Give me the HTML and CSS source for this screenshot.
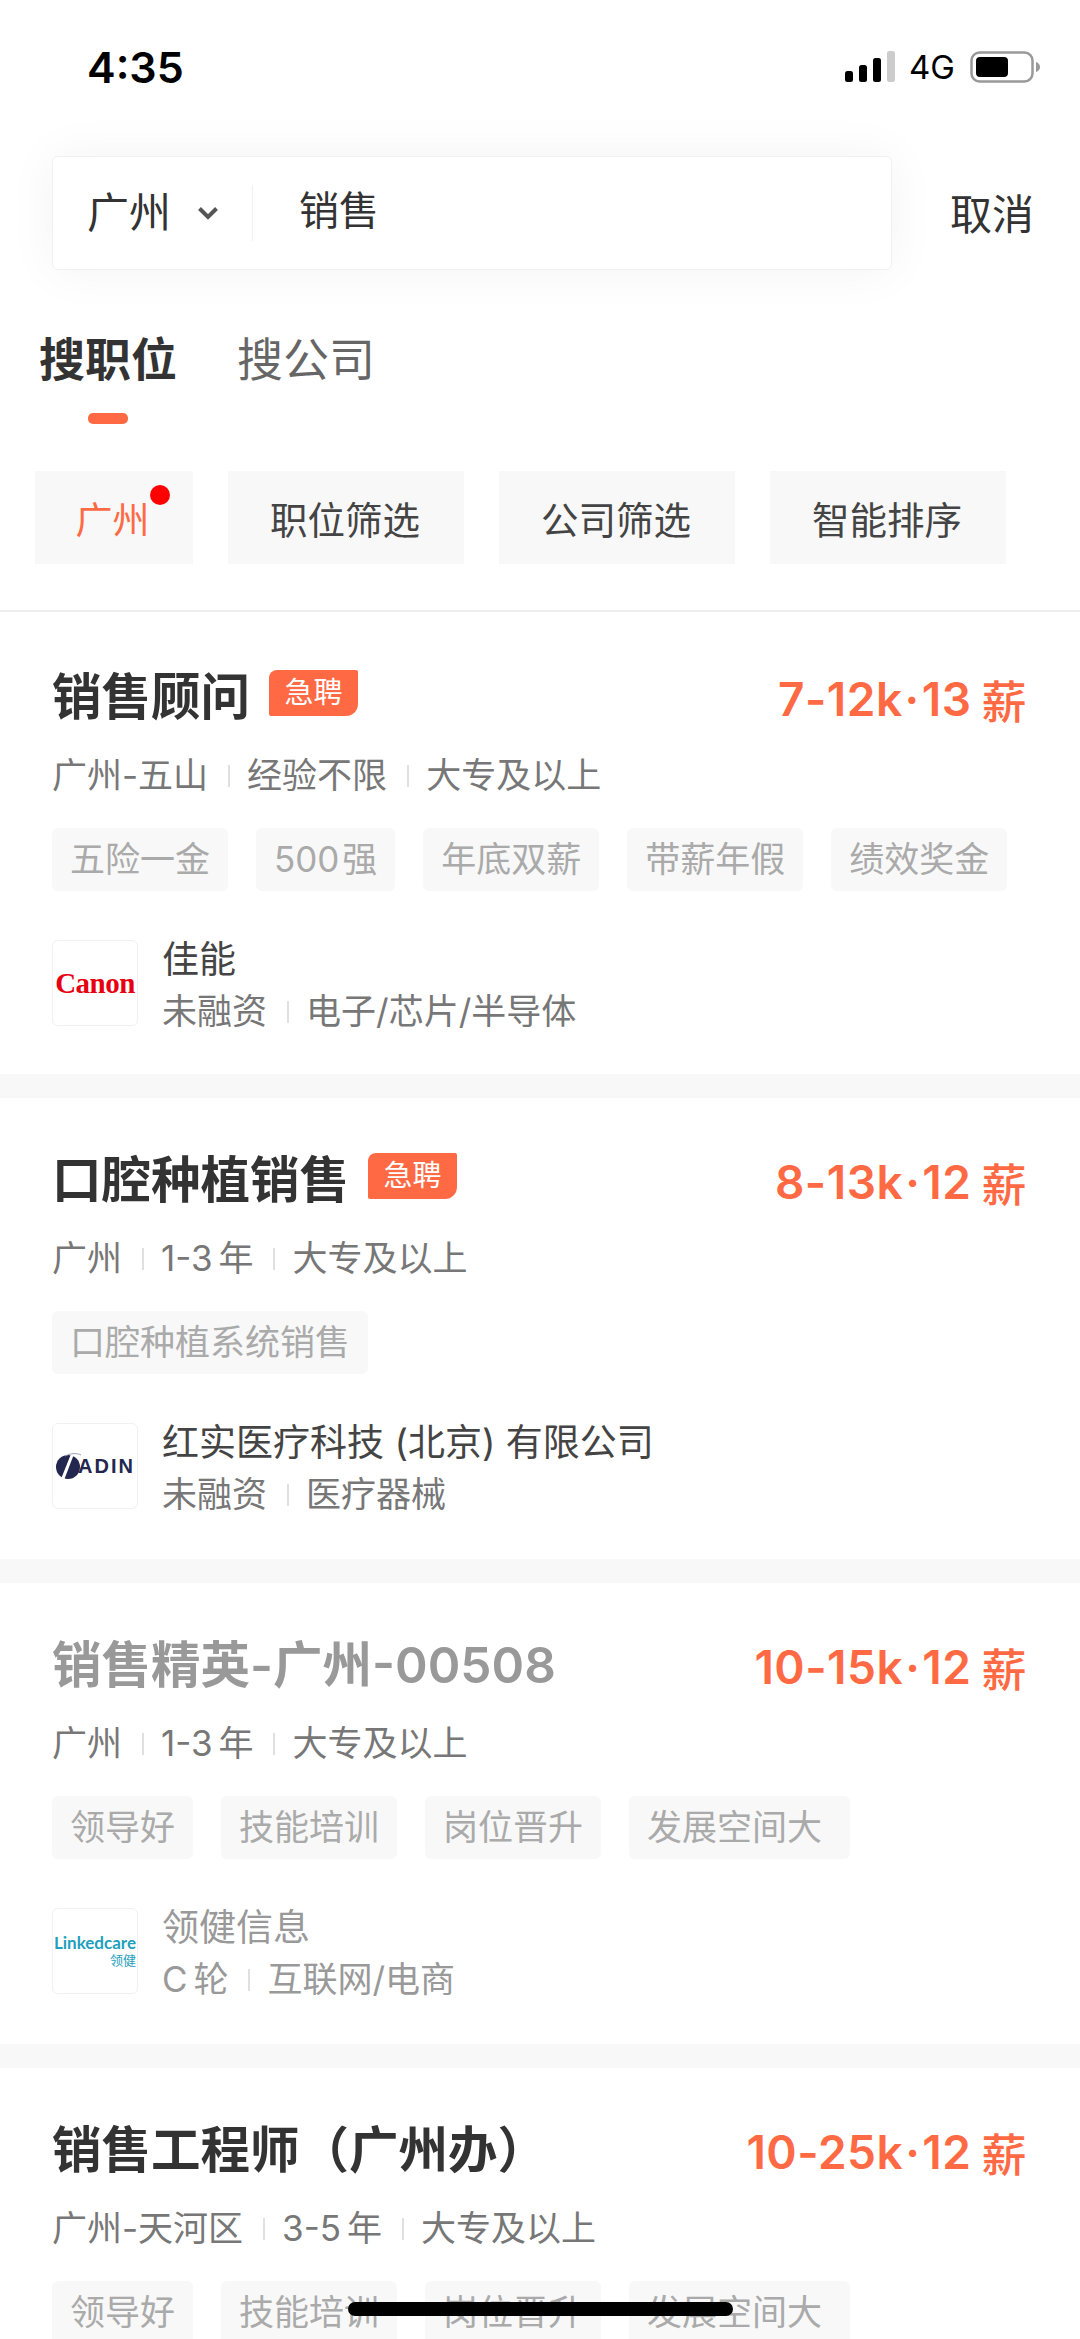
FILE: index.html
```html
<!DOCTYPE html>
<html lang="zh-CN">

<head>
    <meta charset="UTF-8">
    <meta name="viewport" content="width=device-width, initial-scale=1.0">
    <title>搜索职位</title>
    <link rel="stylesheet" href="styles.css">
</head>

<body>
    <div class="status-bar">
        <span class="status-time">4:35</span>
        <div class="status-right">
            <svg class="signal" width="50" height="32" viewBox="0 0 50 32">
                <rect x="0" y="20" width="8" height="11" rx="2.5" fill="#000"/>
                <rect x="14" y="14" width="8" height="17" rx="2.5" fill="#000"/>
                <rect x="28" y="7" width="8" height="24" rx="2.5" fill="#000"/>
                <rect x="42" y="0" width="8" height="31" rx="2.5" fill="#ccc"/>
            </svg>
            <span class="status-net">4G</span>
            <svg class="battery" width="70" height="32" viewBox="0 0 70 32">
                <rect x="1.5" y="1.5" width="61" height="29" rx="8" fill="none" stroke="#999" stroke-width="2.5"/>
                <rect x="6" y="6" width="32" height="20" rx="4" fill="#000"/>
                <path d="M66 11c2.500.8 4 2.700 4 5s-1.500 4.200-4 5z" fill="#999"/>
            </svg>
        </div>
    </div>

    <div class="search-row">
        <div class="search-box">
            <span class="search-city">广州</span>
            <svg class="chevron" width="22" height="14" viewBox="0 0 22 14">
                <path d="M2.500 2.500 11 11l8.500-8.500" fill="none" stroke="#555" stroke-width="4"/>
            </svg>
            <span class="search-sep"></span>
            <span class="search-text">销售</span>
        </div>
        <span class="search-cancel">取消</span>
    </div>

    <div class="tabs">
        <div class="tab tab-active">搜职位<span class="tab-bar"></span></div>
        <div class="tab">搜公司</div>
    </div>

    <div class="filters">
        <div class="filter filter-city">广州<span class="filter-dot"></span></div>
        <div class="filter filter-wide">职位筛选</div>
        <div class="filter filter-wide">公司筛选</div>
        <div class="filter filter-wide">智能排序</div>
    </div>

    <div class="card card-first">
        <div class="job-head">
            <div class="job-title">销售顾问<span class="urgent">急聘</span></div>
            <div class="salary">7-12k<span class="dot">·</span>13<span class="xin">薪</span></div>
        </div>
        <div class="meta"><span>广州-五山</span><span>经验不限</span><span>大专及以上</span></div>
        <div class="tags">
            <span class="tag">五险一金</span><span class="tag">500 强</span><span class="tag">年底双薪</span><span class="tag">带薪年假</span><span class="tag">绩效奖金</span>
        </div>
        <div class="company">
            <div class="logo"><span class="logo-canon">Canon</span></div>
            <div class="company-info">
                <div class="company-name">佳能</div>
                <div class="company-sub"><span>未融资</span><span>电子/芯片/半导体</span></div>
            </div>
        </div>
    </div>

    <div class="card">
        <div class="job-head">
            <div class="job-title">口腔种植销售<span class="urgent">急聘</span></div>
            <div class="salary">8-13k<span class="dot">·</span>12<span class="xin">薪</span></div>
        </div>
        <div class="meta"><span>广州</span><span>1-3 年</span><span>大专及以上</span></div>
        <div class="tags">
            <span class="tag">口腔种植系统销售</span>
        </div>
        <div class="company">
            <div class="logo">
                <svg class="logo-adin-mark" width="26" height="26" viewBox="0 0 26 26">
                    <circle cx="13" cy="14" r="12" fill="#23264f"/>
                    <path d="M16 1 6 26h3.500L19 1z" fill="#fff"/>
                    <path d="M10 3c6-3 12-3 16-1" fill="none" stroke="#9a9cb0" stroke-width="1"/>
                </svg>
                <span class="logo-adin">ADIN</span>
            </div>
            <div class="company-info">
                <div class="company-name">红实医疗科技 (北京) 有限公司</div>
                <div class="company-sub"><span>未融资</span><span>医疗器械</span></div>
            </div>
        </div>
    </div>

    <div class="card card-read">
        <div class="job-head">
            <div class="job-title">销售精英-广州-00508</div>
            <div class="salary">10-15k<span class="dot">·</span>12<span class="xin">薪</span></div>
        </div>
        <div class="meta"><span>广州</span><span>1-3 年</span><span>大专及以上</span></div>
        <div class="tags">
            <span class="tag">领导好</span><span class="tag">技能培训</span><span class="tag">岗位晋升</span><span class="tag tag-long">发展空间大</span>
        </div>
        <div class="company">
            <div class="logo logo-stack">
                <span class="logo-linked">Linkedcare</span>
                <span class="logo-linked-cn">领健</span>
            </div>
            <div class="company-info">
                <div class="company-name">领健信息</div>
                <div class="company-sub"><span>C 轮</span><span>互联网/电商</span></div>
            </div>
        </div>
    </div>

    <div class="card">
        <div class="job-head">
            <div class="job-title">销售工程师（广州办）</div>
            <div class="salary">10-25k<span class="dot">·</span>12<span class="xin">薪</span></div>
        </div>
        <div class="meta"><span>广州-天河区</span><span>3-5 年</span><span>大专及以上</span></div>
        <div class="tags">
            <span class="tag">领导好</span><span class="tag">技能培训</span><span class="tag">岗位晋升</span><span class="tag tag-long">发展空间大</span>
        </div>
    </div>

    <div class="home-bar"></div>
</body>

</html>
```

FILE: styles.css
```css
* {
    box-sizing: border-box;
}

html,
body {
    margin: 0;
    height: 2339px;
    overflow: hidden;
}

body {
    position: relative;
    background: #fff;
    color: #333;
    font-family: "Inter", "Noto Sans CJK SC", sans-serif;
}

/* status bar */
.status-bar {
    display: flex;
    justify-content: space-between;
    align-items: center;
    height: 66px;
    margin-top: 34px;
    padding: 0 40px 0 87px;
}

.status-time {
    font-size: 43px;
    font-weight: 600;
    color: #000;
}

.status-right {
    display: flex;
    align-items: center;
}

.status-net {
    margin: 0 15px 0 14px;
    font-size: 33px;
    font-weight: 400;
    color: #000;
}

/* search */
.search-row {
    display: flex;
    align-items: center;
    height: 114px;
    margin-top: 56px;
    padding-left: 52px;
}

.search-box {
    display: flex;
    align-items: center;
    width: 840px;
    height: 114px;
    padding-left: 34px;
    background: #fff;
    border: 1px solid #f1f1f1;
    border-radius: 6px;
    box-shadow: 0 0 50px rgba(0, 0, 0, 0.05);
}

.search-city {
    font-size: 42px;
    line-height: 50px;
}

.chevron {
    margin-left: 26px;
}

.search-sep {
    width: 1px;
    height: 56px;
    margin-left: 33px;
    background: #f0f0f0;
}

.search-text {
    margin: -4px 0 0 46px;
    font-size: 40px;
    line-height: 50px;
}

.search-cancel {
    margin: -3px 0 0 58px;
    font-size: 42px;
}

/* tabs */
.tabs {
    display: flex;
    gap: 60px;
    margin-top: 59px;
    padding-left: 39px;
}

.tab {
    position: relative;
    font-size: 46px;
    line-height: 60px;
    color: #666;
}

.tab-active {
    color: #333;
    font-weight: 700;
}

.tab-bar {
    position: absolute;
    left: 49px;
    top: 84px;
    width: 40px;
    height: 11px;
    border-radius: 5px;
    background: #ff6a45;
}

/* filter chips */
.filters {
    display: flex;
    gap: 35px;
    height: 141px;
    margin-top: 82px;
    padding-left: 35px;
    border-bottom: 2px solid #eee;
}

.filter {
    display: flex;
    align-items: center;
    justify-content: center;
    height: 93px;
    padding-right: 2px;
    font-size: 37.5px;
    color: #444;
    background: #f8f8f8;
}

.filter-wide {
    width: 236px;
}

.filter-city {
    position: relative;
    width: 158px;
    padding-right: 3px;
    font-size: 37px;
    color: #ff6a45;
}

.filter-dot {
    position: absolute;
    top: 14px;
    left: 115px;
    width: 20px;
    height: 20px;
    border-radius: 50%;
    background: #f00;
}

/* job cards */
.card {
    height: 406px;
    padding: 55px 53px 0 52px;
    border-top: 24px solid #f8f8f8;
    box-sizing: content-box;
}

.card-first {
    padding-top: 58px;
    border-top: 0;
    height: 404px;
}

.job-head {
    display: flex;
    justify-content: space-between;
    align-items: flex-start;
    height: 46px;
}

.job-title {
    display: flex;
    align-items: center;
    height: 46px;
    font-size: 49.5px;
    font-weight: 600;
}

.urgent {
    width: 89px;
    height: 46px;
    margin-left: 19px;
    font-size: 29px;
    font-weight: 400;
    line-height: 46px;
    text-align: center;
    color: #fff;
    background: #ff6a45;
    border-radius: 8px 2px 12px 2px;
}

.salary {
    display: flex;
    align-items: center;
    height: 46px;
    margin-top: 6px;
    font-size: 46px;
    font-weight: 600;
    letter-spacing: 0.5px;
    color: #ff6a45;
}

.dot {
    margin: 0 2px;
}

.xin {
    margin-left: 10px;
    font-size: 45px;
    font-weight: 500;
}

.meta,
.company-sub {
    display: flex;
    align-items: center;
    font-size: 35px;
    line-height: 36px;
    word-spacing: -4px;
    color: #777;
}

.meta {
    margin-top: 41px;
}

.meta span + span,
.company-sub span + span {
    position: relative;
    margin-left: 20px;
    padding-left: 19px;
}

.meta span + span::before,
.company-sub span + span::before {
    content: "";
    position: absolute;
    left: 0;
    top: 8px;
    width: 2px;
    height: 22px;
    background: #e0e0e0;
}

.tags {
    display: flex;
    gap: 28px;
    margin-top: 35px;
}

.tag {
    height: 63px;
    padding: 0 18px;
    font-size: 35px;
    line-height: 63px;
    word-spacing: -7px;
    color: #aaa;
    background: #f8f8f8;
    border-radius: 6px;
}

.tag-long {
    padding-right: 28px;
}

.company {
    display: flex;
    align-items: flex-start;
    gap: 24px;
    margin-top: 49px;
}

.logo {
    display: flex;
    align-items: center;
    justify-content: center;
    width: 86px;
    height: 86px;
    overflow: hidden;
    background: #fff;
    border: 1px solid #f1f1f1;
    border-radius: 6px;
}

.logo-canon {
    font-family: "Liberation Serif", serif;
    font-size: 29px;
    font-weight: 700;
    letter-spacing: -0.5px;
    color: #e60012;
}

.logo-adin-mark {
    flex-shrink: 0;
    margin-right: -3px;
}

.logo-adin {
    font-family: "Liberation Sans", sans-serif;
    font-size: 20px;
    font-weight: 700;
    letter-spacing: 2px;
    color: #23264f;
}

.logo-stack {
    flex-direction: column;
    align-items: flex-end;
    padding: 0 1px 0 0;
}

.logo-linked {
    font-family: "Lato", sans-serif;
    font-size: 17px;
    font-weight: 700;
    line-height: 18px;
    white-space: nowrap;
    color: #1fa0bd;
}

.logo-linked-cn {
    font-size: 13px;
    line-height: 16px;
    color: #1fa0bd;
}

.company-info {
    display: flex;
    flex-direction: column;
    gap: 15px;
    margin-top: 2px;
}

.company-name {
    font-size: 37px;
    line-height: 36px;
    color: #444;
}

.card-read .job-title {
    color: #999;
}

.card-read .company-name {
    color: #999;
}

.card-read .company-sub {
    color: #999;
}

.home-bar {
    position: absolute;
    left: 348px;
    top: 2302px;
    width: 385px;
    height: 14px;
    border-radius: 7px;
    background: #000;
}
```
